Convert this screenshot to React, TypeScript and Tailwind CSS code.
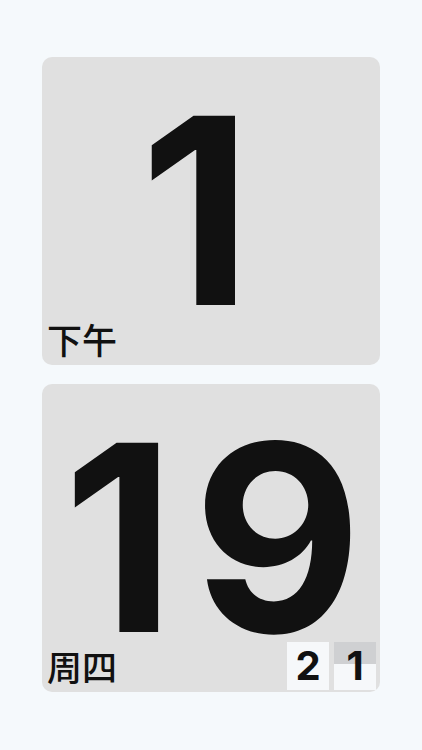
import React from 'react';

function FlipDigit({ value, flipping }: { value: string; flipping?: boolean }) {
  return (
    <div className="relative w-[42px] h-[48px] bg-[#f6f8fa] overflow-hidden">
      {flipping && <div className="absolute left-0 right-0 top-0 h-[22px] bg-[#cfd0d2]" />}
      <div className="relative h-full flex items-center justify-center text-[40px] font-bold leading-none text-[#111]">
        {value}
      </div>
    </div>
  );
}

function Card({ big, label, single, children }: { big: string; label: string; single?: boolean; children?: React.ReactNode }) {
  return (
    <div className="relative h-[308px] rounded-[10px] bg-[#e0e0e0] overflow-hidden flex items-center justify-center">
      <div
        className={`text-[260px] font-bold leading-[0.8] text-[#111] ${
          single ? 'tracking-[10px] pr-[20px]' : 'tracking-[18px] pl-[21px]'
        }`}
      >
        {big}
      </div>
      <div
        className="absolute left-[5px] bottom-[5px] text-[35px] leading-[1.2] font-medium text-[#111]"
        style={{ fontFamily: '"Noto Sans CJK SC", sans-serif' }}
      >
        {label}
      </div>
      {children}
    </div>
  );
}

export default function App() {
  return (
    <div
      className="min-h-[750px] bg-[#f5f9fc] px-[42px] pt-[57px] flex flex-col gap-[19px]"
      style={{ fontFamily: 'Inter, "Liberation Sans", sans-serif' }}
    >
      <Card big="1" label="下午" single />
      <Card big="19" label="周四">
        <div className="absolute right-[4px] bottom-[2px] flex gap-[5px]">
          <FlipDigit value="2" />
          <FlipDigit value="1" flipping />
        </div>
      </Card>
    </div>
  );
}
